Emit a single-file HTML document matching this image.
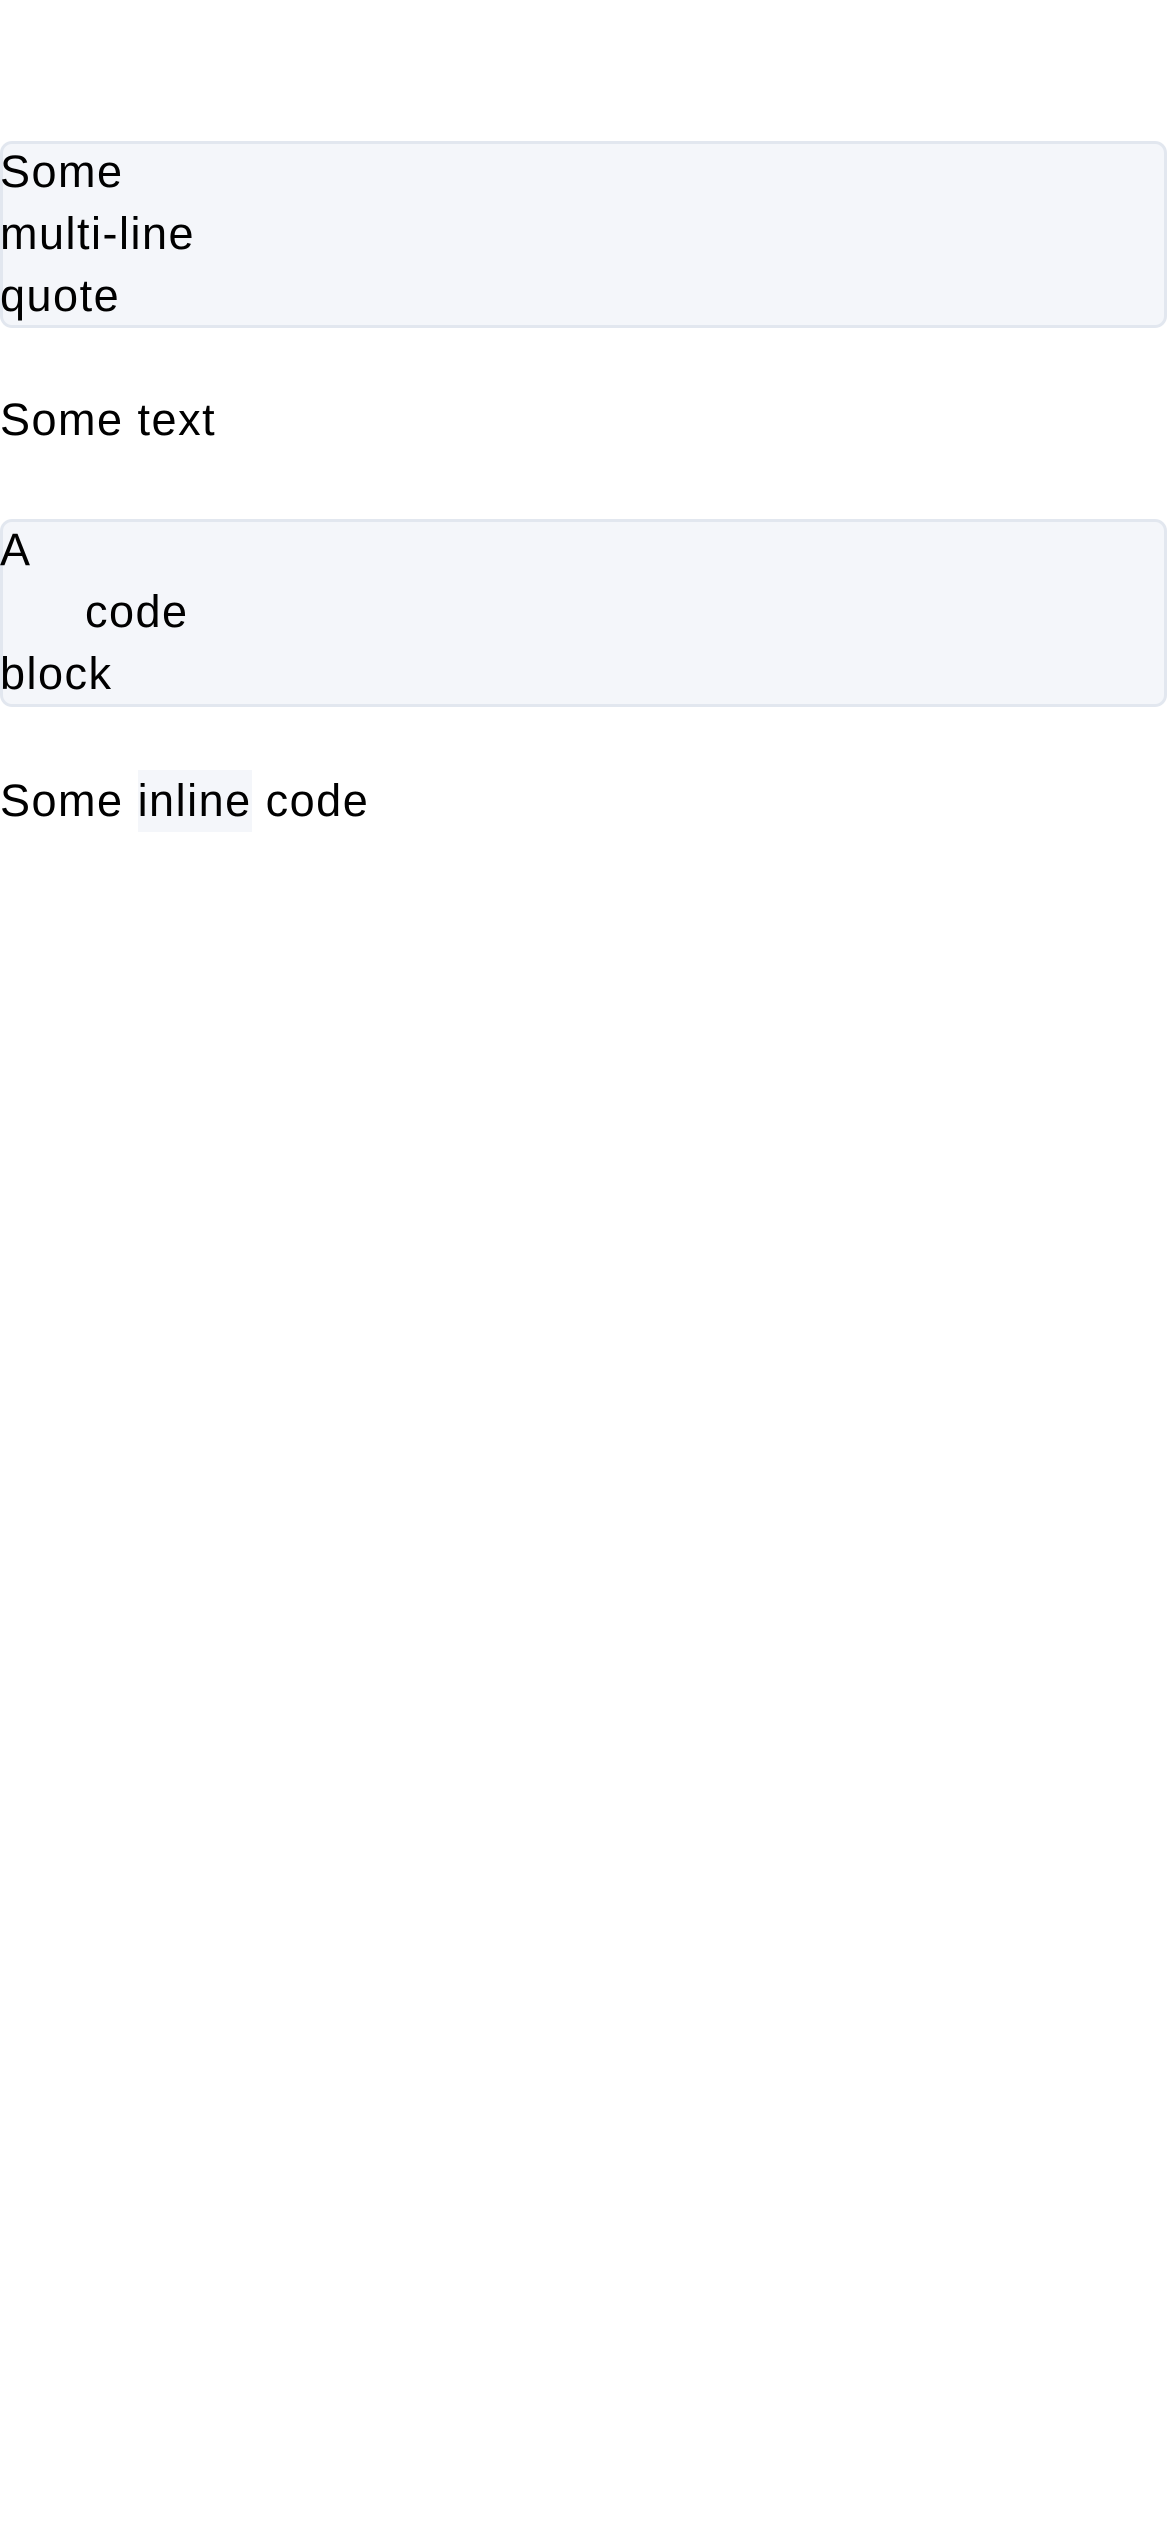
<!DOCTYPE html>
<html><head><meta charset="utf-8"><style>
html,body{margin:0;padding:0;background:#fff;width:1170px;height:2532px;overflow:hidden}
body{font-family:"Liberation Sans",Helvetica,Arial,sans-serif;font-size:45px;letter-spacing:1.5px;color:#000;position:relative}
.box{position:absolute;left:0;width:1167px;border:3px solid #e2e7ef;background:#f4f6fa;border-radius:12px;box-sizing:border-box}
.l{position:absolute;left:0;line-height:61px;height:61px;white-space:pre}
.ic{background:#f4f6fa;display:inline-block;line-height:62px}
</style></head><body>
<div class="box" style="top:141px;height:187px"></div>
<div class="l" style="top:141px">Some</div>
<div class="l" style="top:203px">multi-line</div>
<div class="l" style="top:265px">quote</div>
<div class="l" style="top:389px">Some text</div>
<div class="box" style="top:519px;height:188px"></div>
<div class="l" style="top:519px">A</div>
<div class="l" style="top:581px;left:85px">code</div>
<div class="l" style="top:643px">block</div>
<div class="l" style="top:770px;line-height:62px;height:62px">Some <span class="ic">inline</span> code</div>
</body></html>
